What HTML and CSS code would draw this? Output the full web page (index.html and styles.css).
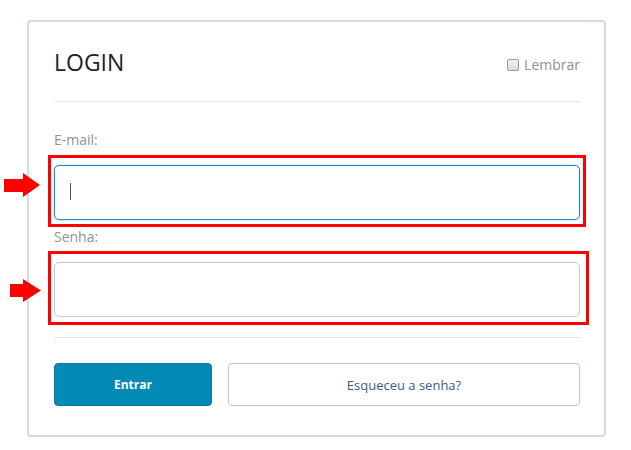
FILE: index.html
```html
<!DOCTYPE html>
<html lang="pt-BR">

<head>
    <meta charset="UTF-8">
    <meta name="viewport" content="width=device-width, initial-scale=1.0">
    <title>Login</title>
    <link rel="stylesheet" href="styles.css">
</head>

<body>
    <div class="login-box">
        <div class="login-head">
            <h1>LOGIN</h1>
            <label class="remember"><span class="check"></span>Lembrar</label>
        </div>

        <form class="login-form">
            <label class="field-label">E-mail:</label>
            <div class="field">
                <input type="text" class="input input-focus">
                <span class="caret"></span>
                <span class="mark mark-email"></span>
                <svg class="arrow arrow-email" width="36" height="24" viewBox="0 0 36 24">
                    <polygon points="0,6 19,6 19,0 36,12 19,24 19,19 0,19" fill="#ff0000" />
                </svg>
            </div>

            <label class="field-label">Senha:</label>
            <div class="field">
                <input type="password" class="input">
                <span class="mark mark-senha"></span>
                <svg class="arrow arrow-senha" width="31" height="23" viewBox="0 0 31 23">
                    <polygon points="0,5 13,5 13,0 31,11.5 13,23 13,18 0,18" fill="#ff0000" />
                </svg>
            </div>
        </form>

        <div class="actions">
            <button class="btn btn-enter">Entrar</button>
            <button class="btn btn-forgot">Esqueceu a senha?</button>
        </div>
    </div>
</body>

</html>
```

FILE: styles.css
```css
body {
    margin: 0;
    background-color: #fff;
    font-family: 'Open Sans', sans-serif;
}

.login-box {
    width: 526px;
    margin: 20px 0 0 27px;
    padding: 24px 24px 29px 25px;
    border: 2px solid #d3dde1;
    border-radius: 4px;
}

.login-head {
    display: flex;
    justify-content: space-between;
    align-items: flex-start;
    padding-bottom: 23px;
    border-bottom: 1px solid #e5e5e5;
}

.login-head h1 {
    margin: 0;
    font-size: 23px;
    font-weight: 400;
    line-height: 32px;
    color: #222;
}

.remember {
    display: flex;
    align-items: center;
    margin-top: 10px;
    font-size: 14px;
    line-height: 18px;
    color: #8a929b;
}

.check {
    width: 10px;
    height: 10px;
    margin-right: 5px;
    border: 1px solid #9a9a9a;
    border-radius: 2px;
    background: linear-gradient(#f2f2f2, #dcdcdc);
}

.login-form {
    display: flex;
    flex-direction: column;
    padding: 29px 0 20px;
    border-bottom: 1px solid #e5e5e5;
}

.field-label {
    font-size: 14px;
    line-height: 18px;
    color: #8c9399;
    margin-bottom: 16px;
}

.field {
    position: relative;
    margin-bottom: 8px;
}

.field:last-child {
    margin-bottom: 0;
}

.input {
    display: block;
    box-sizing: border-box;
    width: 100%;
    height: 55px;
    padding: 0 15px;
    border: 1px solid #bfcad1;
    border-radius: 5px;
    background: #fff;
    outline: none;
}

.input-focus {
    border-color: #1f8cc0;
    box-shadow: 0 0 3px rgba(70, 160, 215, 0.45);
}

.caret {
    position: absolute;
    left: 16px;
    top: 18px;
    width: 1px;
    height: 17px;
    background: #555;
}

/* annotations drawn over the screenshot */
.mark {
    position: absolute;
    border: 3px solid #ff0000;
    pointer-events: none;
}

.mark-email {
    left: -6px;
    right: -6px;
    top: -10px;
    bottom: -7px;
}

.mark-senha {
    left: -6px;
    right: -9px;
    top: -11px;
    bottom: -8px;
}

.arrow {
    position: absolute;
}

.arrow-email {
    left: -50px;
    top: 8px;
}

.arrow-senha {
    left: -44px;
    top: 17px;
}

.actions {
    display: flex;
    gap: 16px;
    margin-top: 25px;
}

.btn {
    height: 43px;
    border-radius: 4px;
    font-family: 'Open Sans', sans-serif;
    font-size: 12px;
    cursor: pointer;
}

.btn-enter {
    width: 158px;
    border: 1px solid #0a7aa1;
    background-color: #018ab4;
    color: #fff;
    font-weight: 700;
}

.btn-forgot {
    flex: 1;
    border: 1px solid #bcc6cc;
    background-color: #fff;
    color: #3b5a8c;
    font-size: 13px;
}
```
